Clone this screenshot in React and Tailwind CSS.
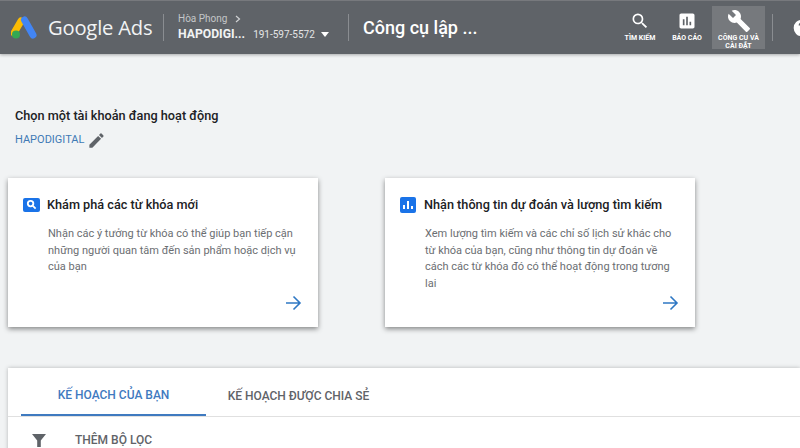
import React from "react";

const Logo = () => (
  <svg width="28" height="26" viewBox="0 0 28 26" className="shrink-0">
    <path d="M10 6 L3 18" stroke="#fbbc04" strokeWidth="7" strokeLinecap="round" />
    <path d="M13.500 5 L22 20" stroke="#4285f4" strokeWidth="7" strokeLinecap="round" />
    <circle cx="5" cy="19.500" r="4" fill="#34a853" />
  </svg>
);

const Nav = ({ icon, children, active }) => (
  <div className={`flex flex-col items-center h-[43px] pt-[4px] ${active ? "bg-[#76797d] w-[53px]" : ""}`}>
    <div className="h-[22px] flex items-center justify-center">{icon}</div>
    <div className="text-[7px] leading-[8px] font-bold text-center text-white mt-[2px] whitespace-pre-line">{children}</div>
  </div>
);

const Card = ({ icon, title, children, iconGap }) => (
  <div className="w-[310px] h-[149px] bg-white shadow-[0_2px_5px_rgba(0,0,0,0.45)] flex flex-col pl-[15px] pr-[16px] pt-[18px] pb-[15px]">
    <div className={`flex items-center h-[17px] ${iconGap}`}>
      {icon}
      <div className="text-[12.700px] font-medium text-[#202124] whitespace-nowrap">{title}</div>
    </div>
    <div className="pl-[25px] mt-[13px] text-[11px] leading-[16.500px] text-[#6b6e72]">{children}</div>
    <div className="mt-auto flex justify-end">
      <svg width="18" height="18" viewBox="0 0 18 18" fill="none" stroke="#2f78c4" strokeWidth="1.6">
        <path d="M2 9h13.500M9.500 2.500 16 9l-6.500 6.500" />
      </svg>
    </div>
  </div>
);

export default function App() {
  return (
    <div className="w-[800px] h-[448px] overflow-hidden bg-[#f1f3f4] font-['Roboto',sans-serif] flex flex-col">
      <header className="h-[54px] shrink-0 bg-[#5f6368] border-t border-[#77797d] shadow-[0_1px_3px_rgba(0,0,0,0.3)] flex items-center text-white overflow-hidden">
        <div className="ml-[11px] shrink-0"><Logo /></div>
        <div className="ml-[9px] text-[20.200px] text-[#f1f3f4] tracking-[-0.2px] whitespace-nowrap font-['Open_Sans',sans-serif] w-[115px] shrink-0">Google Ads</div>
        <div className="w-px h-[27px] bg-[#8a8d91] shrink-0" />
        <div className="ml-[14px] w-[170px] shrink-0">
          <div className="text-[10px] leading-[13px] text-[#c4c6c9] flex items-center gap-[8px]">
            Hòa Phong
            <svg width="6" height="8" viewBox="0 0 6 8" fill="none" stroke="#d0d2d4" strokeWidth="1.2"><path d="M1 1l3.500 3L1 7" /></svg>
          </div>
          <div className="flex items-center mt-[1px] whitespace-nowrap">
            <span className="text-[12.200px] leading-[17px] font-bold text-[#f1f3f4]">HAPODIGI...</span>
            <span className="ml-[8px] text-[10px] text-[#e4e5e6]">191-597-5572</span>
            <span className="ml-[6px] w-0 h-0 border-x-[4.500px] border-x-transparent border-t-[5px] border-t-white" />
          </div>
        </div>
        <div className="w-px h-[27px] bg-[#8a8d91] shrink-0" />
        <div className="ml-[14px] text-[18px] font-medium text-white whitespace-nowrap w-[253px] shrink-0">Công cụ lập ...</div>
        <div className="w-[48px] flex justify-center shrink-0">
          <Nav icon={
            <svg width="20" height="20" viewBox="0 0 24 24" fill="white"><path d="M15.500 14h-.79l-.28-.27A6.470 6.470 0 0 0 16 9.500 6.500 6.500 0 1 0 9.500 16c1.610 0 3.090-.59 4.230-1.570l.27.28v.79l5 4.990L20.490 19l-4.990-5zm-6 0C7.010 14 5 11.990 5 9.500S7.010 5 9.500 5 14 7.010 14 9.500 11.990 14 9.500 14z" /></svg>
          }>TÌM KIẾM</Nav>
        </div>
        <div className="w-[46px] flex justify-center shrink-0">
          <Nav icon={
            <svg width="20" height="20" viewBox="0 0 24 24" fill="white"><path d="M19 3H5c-1.100 0-2 .9-2 2v14c0 1.100.9 2 2 2h14c1.100 0 2-.9 2-2V5c0-1.100-.9-2-2-2zM9 17H7v-7h2v7zm4 0h-2V7h2v10zm4 0h-2v-4h2v4z" /></svg>
          }>BÁO CÁO</Nav>
        </div>
        <div className="ml-[2px] self-start mt-[5px] shrink-0">
          <Nav active icon={
            <svg width="24" height="24" viewBox="0 0 24 24" fill="white"><path d="M22.700 19l-9.100-9.100c.9-2.300.4-5-1.500-6.900-2-2-5-2.400-7.400-1.300L9 6 6 9 1.600 4.700C.4 7.100.9 10.100 2.900 12.100c1.900 1.900 4.600 2.400 6.900 1.500l9.100 9.100c.4.4 1 .4 1.400 0l2.300-2.300c.5-.4.5-1.100.1-1.400z" /></svg>
          }>{"CÔNG CỤ VÀ\nCÀI ĐẶT"}</Nav>
        </div>
        <div className="ml-[7px] w-px h-[27px] bg-[#8a8d91] shrink-0" />
        <svg className="ml-[19px] shrink-0" width="20" height="20" viewBox="0 0 24 24" fill="white"><path d="M12 2a10 10 0 1 0 0 20 10 10 0 0 0 0-20zm1 17h-2v-2h2v2zm2.070-7.750-.9.92C13.450 12.900 13 13.500 13 15h-2v-.5c0-1.100.45-2.100 1.170-2.830l1.240-1.260c.37-.36.59-.86.59-1.410 0-1.100-.9-2-2-2s-2 .9-2 2H8c0-2.210 1.790-4 4-4s4 1.790 4 4c0 .88-.36 1.680-.93 2.250z" /></svg>
      </header>

      <main className="flex-1 flex flex-col min-h-0">
        <div className="mt-[53px] ml-[15px] text-[12.700px] leading-[18px] font-medium text-[#202124]">Chọn một tài khoản đang hoạt động</div>
        <div className="ml-[15px] mt-[6px] flex items-center gap-[3px] h-[18px]">
          <span className="text-[11px] text-[#3f7ab5]">HAPODIGITAL</span>
          <svg width="19" height="19" viewBox="0 0 24 24" fill="#5f6368"><path d="M3 17.250V21h3.750L17.810 9.940l-3.750-3.750L3 17.250zM20.710 7.040a1 1 0 0 0 0-1.410l-2.340-2.340a1 1 0 0 0-1.410 0l-1.830 1.830 3.750 3.750 1.830-1.830z" /></svg>
        </div>
        <div className="mt-[29px] ml-[8px] flex gap-[67px]">
          <Card title="Khám phá các từ khóa mới" iconGap="gap-[7px]" icon={
            <span className="w-[17px] h-[14px] rounded-[2px] bg-[#1a73e8] flex items-center justify-center">
              <svg width="11" height="11" viewBox="0 0 24 24" fill="none" stroke="white" strokeWidth="4"><circle cx="10" cy="10" r="6" /><path d="M15 15l6 6" /></svg>
            </span>
          }>
            Nhận các ý tưởng từ khóa có thể giúp bạn tiếp cận những người quan tâm đến sản phẩm hoặc dịch vụ của bạn
          </Card>
          <Card title="Nhận thông tin dự đoán và lượng tìm kiếm" iconGap="gap-[8px]" icon={
            <span className="w-[16px] h-[16px] rounded-[2px] bg-[#1a73e8] flex items-end justify-center gap-[2px] pb-[4px]">
              <span className="w-[2px] h-[4px] bg-white" />
              <span className="w-[2px] h-[8px] bg-white" />
              <span className="w-[2px] h-[3px] bg-white" />
            </span>
          }>
            Xem lượng tìm kiếm và các chỉ số lịch sử khác cho từ khóa của bạn, cũng như thông tin dự đoán về cách các từ khóa đó có thể hoạt động trong tương lai
          </Card>
        </div>
        <section className="mt-[41px] ml-[8px] flex-1 bg-white shadow-[0_0_4px_rgba(0,0,0,0.25)]">
          <div className="h-[49px] border-b border-[#e0e0e0] flex pl-[13px]">
            <div className="w-[185px] h-[48px] pt-[8px] border-b-2 border-[#3f7ac0] flex items-center justify-center text-[12px] font-medium text-[#3f7ac0]">KẾ HOẠCH CỦA BẠN</div>
            <div className="w-[185px] h-[48px] pt-[8px] flex items-center justify-center text-[12px] font-medium text-[#5f6368] whitespace-nowrap">KẾ HOẠCH ĐƯỢC CHIA SẺ</div>
          </div>
          <div className="flex items-center pl-[23px] h-[46px]">
            <svg width="16" height="16" viewBox="0 0 16 16" fill="#5f6368"><path d="M1 2h14L9.800 8.500V15H6.200V8.500z" /></svg>
            <span className="ml-[28px] text-[12px] font-medium text-[#5f6368]">THÊM BỘ LỌC</span>
          </div>
        </section>
      </main>
    </div>
  );
}
